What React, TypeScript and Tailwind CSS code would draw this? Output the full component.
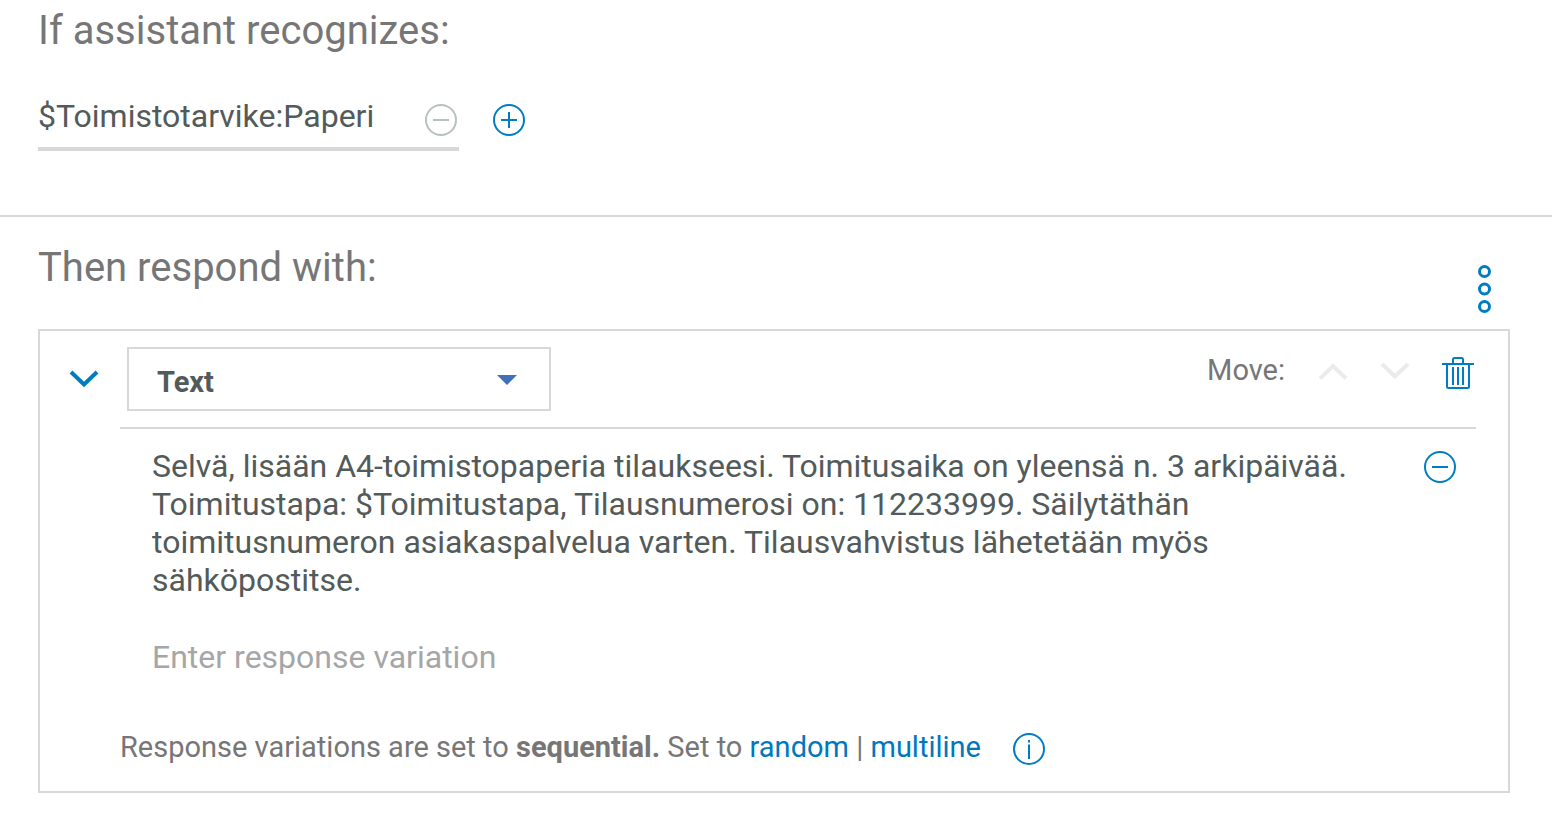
import { useState } from 'react';

const initialResponse =
  'Selvä, lisään A4-toimistopaperia tilaukseesi. Toimitusaika on yleensä n. 3 arkipäivää. Toimitustapa: $Toimitustapa, Tilausnumerosi on: 112233999. Säilytäthän toimitusnumeron asiakaspalvelua varten. Tilausvahvistus lähetetään myös sähköpostitse.';

function CircleIcon({ kind }: { kind: 'plus' | 'minus' | 'info' }) {
  return (
    <svg className="block size-8" viewBox="0 0 32 32" fill="none" stroke="currentColor" strokeWidth="2" aria-hidden="true">
      <circle cx="16" cy="16" r="15" />
      {kind !== 'info' && <path d="M8 16h16" />}
      {kind === 'plus' && <path d="M16 8v16" />}
      {kind === 'info' && <path d="M16 11.500v14.500M16 7v2.500" />}
    </svg>
  );
}

function Chevron({ up = false }: { up?: boolean }) {
  return (
    <svg className="block h-5 w-7 overflow-visible" viewBox="0 0 28 20" fill="none" stroke="currentColor" strokeWidth="4" aria-hidden="true">
      <path d={up ? 'M1 17.500 14 5l13 12.500' : 'M1 3 14 15.500 27 3'} />
    </svg>
  );
}

function Trash() {
  return (
    <svg className="block size-8" viewBox="0 0 32 32" fill="none" stroke="currentColor" strokeWidth="2" aria-hidden="true">
      <path d="M0 7h32M11 7V2.500Q11 1 12.500 1h7Q21 1 21 2.500V7M5 7v22.500Q5 31 6.500 31h19Q27 31 27 29.500V7M11 10v18M16 10v18M21 10v18" />
    </svg>
  );
}

export default function App() {
  const [response, setResponse] = useState(initialResponse);

  return (
    <main className="min-h-screen bg-white pb-7 font-[Roboto,sans-serif] text-[#777677]">
      <section className="pr-[42px] pb-16 pl-[38px]">
        <h2 className="text-[40px] leading-[62px]">If assistant recognizes:</h2>
        <div className="mt-[22px] flex items-start gap-[34px]">
          <div className="flex w-[421px] items-start border-b-4 border-[#d8d8d8] pr-0.5">
            <input
              aria-label="Condition"
              defaultValue="$Toimistotarvike:Paperi"
              className="h-[63px] min-w-0 flex-1 text-[32px] text-[#525a5a] outline-none"
            />
            <button type="button" aria-label="Remove condition" className="mt-5 text-[#b8c1c1]">
              <CircleIcon kind="minus" />
            </button>
          </div>
          <button type="button" aria-label="Add condition" className="mt-5 text-[#007dc1]">
            <CircleIcon kind="plus" />
          </button>
        </div>
      </section>

      <section className="border-t-2 border-[#d8d8d8] pt-5 pr-[42px] pl-[38px]">
        <div className="flex items-start justify-between pb-[30px]">
          <h2 className="text-[40px] leading-[62px]">Then respond with:</h2>
          <button type="button" aria-label="Response options" className="mt-7 -mb-5 mr-[18px] text-[#007dc1]">
            <svg className="block h-12 w-3.5" viewBox="0 0 14 48" fill="none" stroke="currentColor" strokeWidth="3" aria-hidden="true">
              <circle cx="6.500" cy="6.500" r="5" />
              <circle cx="6.500" cy="24" r="5" />
              <circle cx="6.500" cy="41.500" r="5" />
            </svg>
          </button>
        </div>

        <div className="flex border-2 border-[#d8d8d8] pt-4 pr-8 pb-[26px]">
          <div className="w-20 shrink-0 pt-[22px] pl-[30px]">
            <button type="button" aria-label="Collapse response" className="block text-[#007dc1]">
              <Chevron />
            </button>
          </div>
          <div className="min-w-0 flex-1">
            <div className="flex items-start border-b-2 border-[#d8d8d8] pb-4 pl-[7px]">
              <div className="relative w-[424px]">
                <select
                  aria-label="Response type"
                  className="block h-16 w-full appearance-none border-2 border-[#d8d8d8] bg-white pt-2 pl-7 text-[29px] font-bold text-[#525a5a]"
                >
                  <option>Text</option>
                </select>
                <svg className="pointer-events-none absolute top-7 right-[34px] h-2.5 w-5" viewBox="0 0 20 10" fill="#4070b7" aria-hidden="true">
                  <path d="M0 0h20L10 10z" />
                </svg>
              </div>
              <div className="ml-auto flex items-start pt-2 pr-0.5">
                <span className="text-[29px] leading-[30px]">Move:</span>
                <button type="button" aria-label="Move up" disabled className="mt-1.5 ml-[34px] text-[#ebebeb]">
                  <Chevron up />
                </button>
                <button type="button" aria-label="Move down" disabled className="mt-1.5 ml-[34px] text-[#ebebeb]">
                  <Chevron />
                </button>
                <button type="button" aria-label="Delete response" className="mt-0.5 ml-[33px] text-[#007dc1]">
                  <Trash />
                </button>
              </div>
            </div>

            <div className="flex items-start pt-[18px] pr-5 pl-8">
              <textarea
                aria-label="Response text"
                rows={4}
                value={response}
                onChange={(e) => setResponse(e.target.value)}
                className="block min-w-0 flex-1 resize-none overflow-hidden pr-14 text-[32px] leading-[38px] text-[#525a5a] outline-none"
              />
              <button type="button" aria-label="Remove variation" className="mt-1 text-[#007dc1]">
                <CircleIcon kind="minus" />
              </button>
            </div>
            <div className="pt-[34px] pl-8">
              <input
                aria-label="Response variation"
                placeholder="Enter response variation"
                className="block h-12 w-full text-[32px] text-[#525a5a] outline-none placeholder:text-[#a6a6a6]"
              />
            </div>
            <div className="flex items-start gap-8 pt-[52px]">
              <p className="text-[29px] leading-7">
                Response variations are set to <strong>sequential.</strong> Set to{' '}
                <a href="#random" className="text-[#0078bd]">random</a> |{' '}
                <a href="#multiline" className="text-[#0078bd]">multiline</a>
              </p>
              <button type="button" aria-label="About response variations" className="text-[#007dc1]">
                <CircleIcon kind="info" />
              </button>
            </div>
          </div>
        </div>
      </section>
    </main>
  );
}
